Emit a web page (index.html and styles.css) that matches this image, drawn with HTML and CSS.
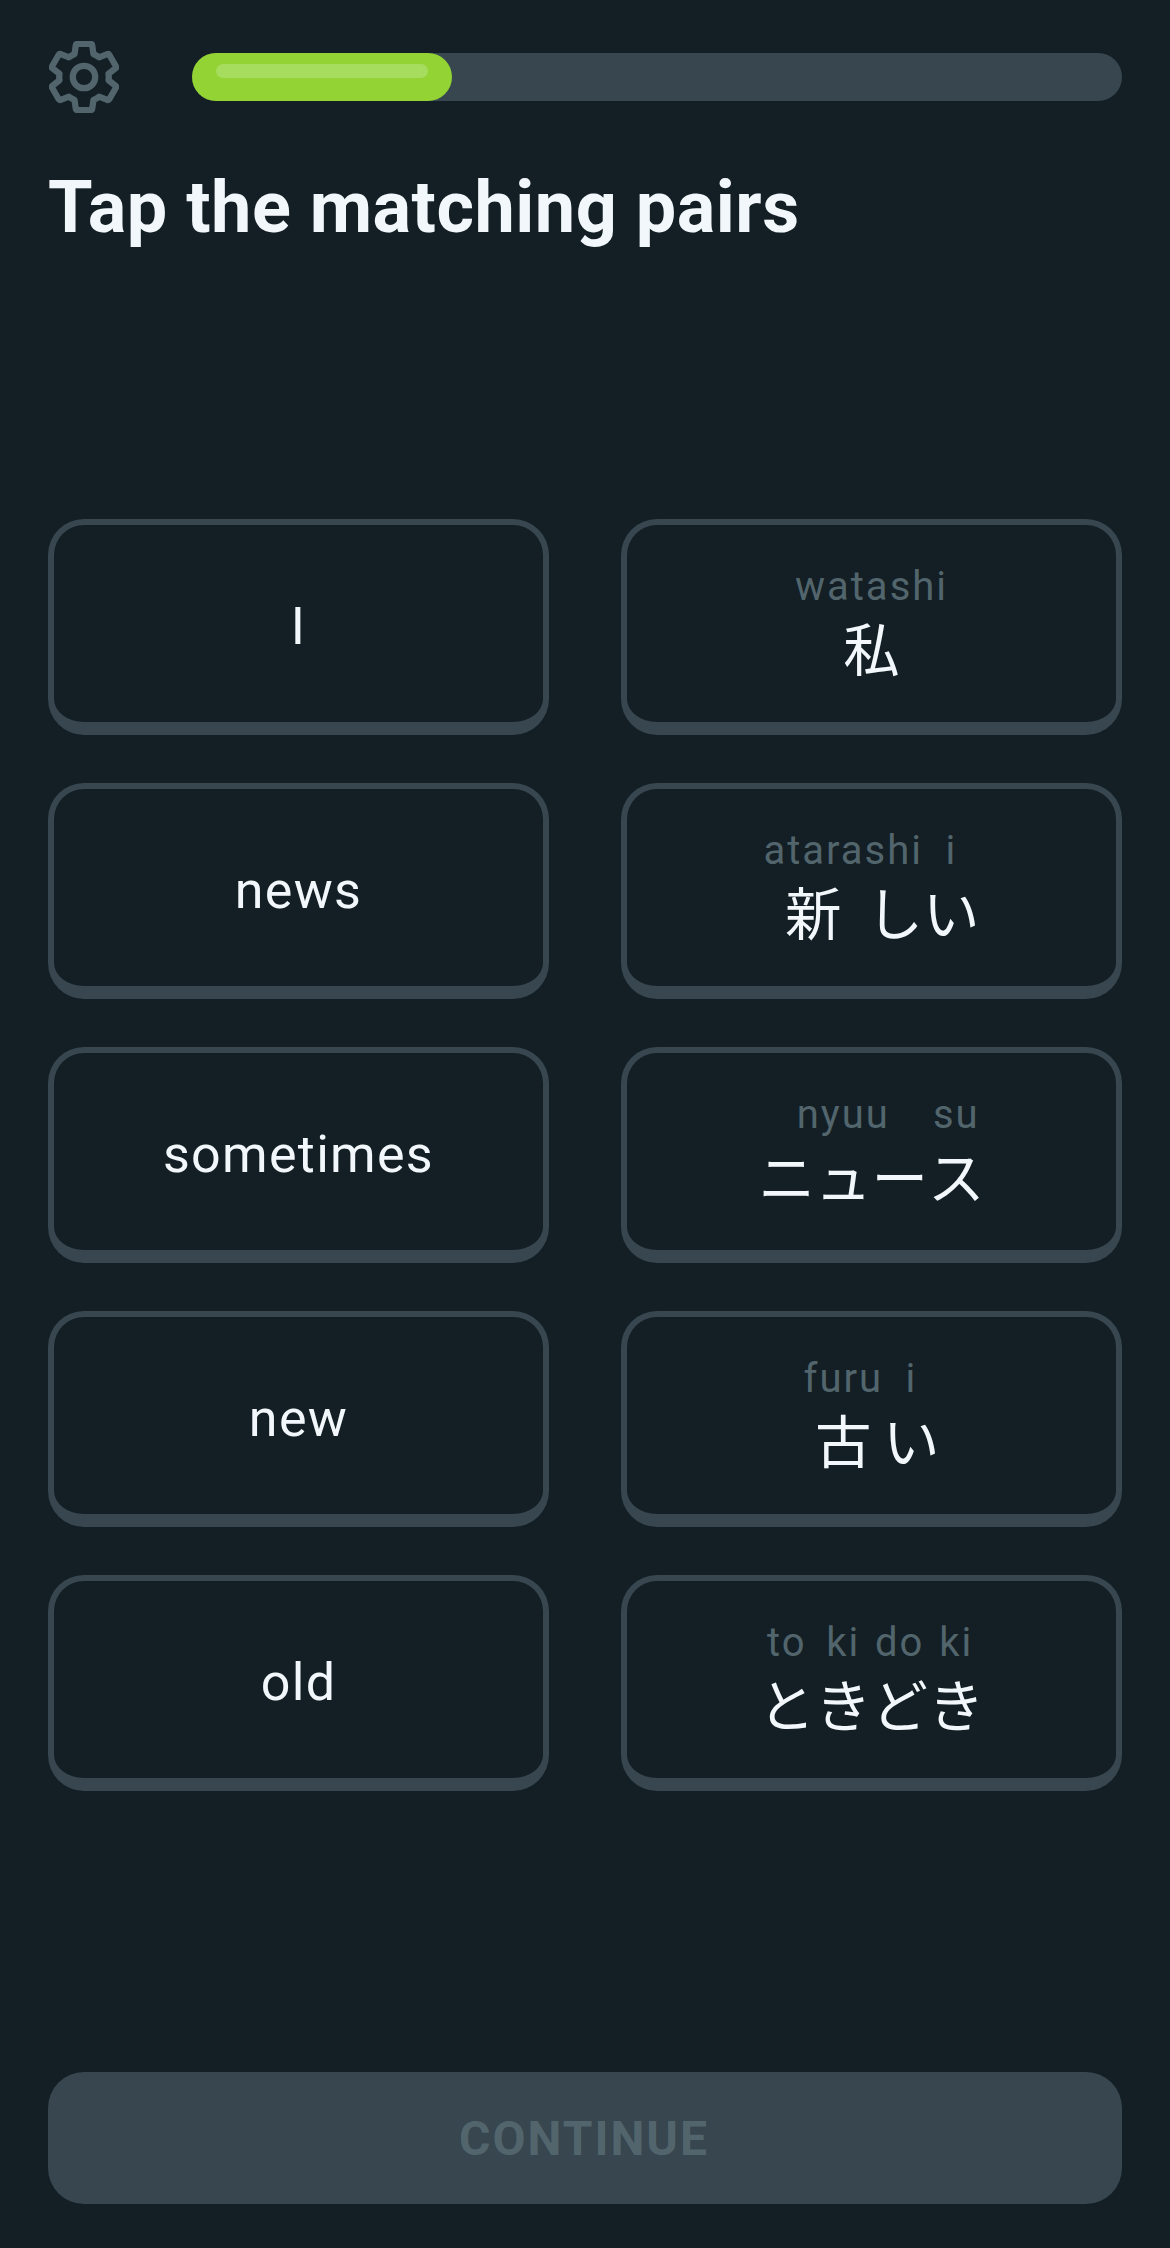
FILE: index.html
```html
<!DOCTYPE html>
<html lang="ja">
<head>
<meta charset="utf-8">
<title>Tap the matching pairs</title>
<link rel="stylesheet" href="styles.css">
</head>
<body>
<div class="screen">
  <header class="top">
    <svg class="gear" viewBox="1.4 1.1 21.2 21.8" fill="none" stroke="#52656d" stroke-width="1.9" stroke-linejoin="round">
      <path d="M19.43 12.98c.04-.32.07-.64.07-.98 0-.34-.03-.66-.07-.98l2.11-1.65c.19-.15.24-.42.12-.64l-2-3.46c-.09-.16-.26-.25-.44-.25-.06 0-.12.01-.17.03l-2.49 1c-.52-.4-1.08-.73-1.69-.98l-.38-2.65C14.46 2.18 14.25 2 14 2h-4c-.25 0-.46.18-.49.42l-.38 2.65c-.61.25-1.17.59-1.69.98l-2.49-1c-.06-.02-.12-.03-.18-.03-.17 0-.34.09-.43.25l-2 3.46c-.13.22-.07.49.12.64l2.11 1.65c-.04.32-.07.65-.07.98 0 .33.03.66.07.98l-2.11 1.65c-.19.15-.24.42-.12.64l2 3.46c.09.16.26.25.44.25.06 0 .12-.01.17-.03l2.49-1c.52.4 1.08.73 1.69.98l.38 2.65c.03.24.24.42.49.42h4c.25 0 .46-.18.49-.42l.38-2.65c.61-.25 1.17-.59 1.69-.98l2.49 1c.06.02.12.03.18.03.17 0 .34-.09.43-.25l2-3.46c.12-.22.07-.49-.12-.64l-2.11-1.65z"/>
      <circle cx="12" cy="12" r="3.4"/>
    </svg>
    <div class="track"><div class="fill"><div class="shine"></div></div></div>
  </header>
  <h1 class="title">Tap the matching pairs</h1>
  <main class="pairs">
    <button class="card"><span class="word">I</span></button>
    <button class="card"><span class="tokens">
      <span class="tok"><span class="rd">watashi</span><span class="jp"><span>私</span></span></span>
    </span></button>
    <button class="card"><span class="word">news</span></button>
    <button class="card"><span class="tokens">
      <span class="tok"><span class="rd">atarashi</span><span class="jp jp-end"><span>新</span><span>し</span></span></span>
      <span class="tok"><span class="rd">i</span><span class="jp"><span>い</span></span></span>
    </span></button>
    <button class="card"><span class="word">sometimes</span></button>
    <button class="card"><span class="tokens">
      <span class="tok"><span class="rd">nyuu</span><span class="jp"><span>ニ</span><span>ュ</span><span>ー</span></span></span>
      <span class="tok"><span class="rd">su</span><span class="jp"><span>ス</span></span></span>
    </span></button>
    <button class="card"><span class="word">new</span></button>
    <button class="card"><span class="tokens">
      <span class="tok"><span class="rd">furu</span><span class="jp"><span>古</span></span></span>
      <span class="tok"><span class="rd">i</span><span class="jp"><span>い</span></span></span>
    </span></button>
    <button class="card"><span class="word">old</span></button>
    <button class="card"><span class="tokens">
      <span class="tok"><span class="rd">to</span><span class="jp"><span>と</span></span></span>
      <span class="tok"><span class="rd">ki</span><span class="jp"><span>き</span></span></span>
      <span class="tok"><span class="rd">do</span><span class="jp"><span>ど</span></span></span>
      <span class="tok"><span class="rd">ki</span><span class="jp"><span>き</span></span></span>
    </span></button>
  </main>
  <button class="continue">CONTINUE</button>
</div>
</body>
</html>
```
FILE: styles.css
```css
* { box-sizing: border-box; }
html, body { margin: 0; padding: 0; }
body { background: #131f24; font-family: Roboto, "Noto Sans CJK JP", sans-serif; }
.screen { width: 1170px; height: 2248px; padding: 41px 48px 44px; display: flex; flex-direction: column; }
.top { display: flex; align-items: center; height: 72px; gap: 73px; padding-left: 1px; }
.gear { width: 70px; height: 72px; flex: none; }
.track { flex: 1; height: 48px; border-radius: 24px; background: #37464f; }
.fill { width: 260px; height: 48px; border-radius: 24px; background: #93d333; padding: 11px 24px; }
.shine { height: 14px; border-radius: 7px; background: #a6dd5f; }
.title { margin: 53px 0 0; color: #f1f7fb; font-size: 72px; line-height: 84px; font-weight: 700; letter-spacing: 0.5px; height: 84px; white-space: nowrap; }
.pairs { display: grid; grid-template-columns: 501px 501px; justify-content: space-between; grid-auto-rows: 216px; row-gap: 48px; margin-top: 269px; }
.card { background: transparent; border: solid #37464f; border-width: 6px 6px 13px; border-radius: 36px; padding: 0; display: flex; align-items: center; justify-content: center; font-family: inherit; }
.word { color: #f1f7fb; font-size: 52px; line-height: 60px; letter-spacing: 1.3px; padding-top: 6px; }
.tokens { display: flex; }
.tok { display: flex; flex-direction: column; align-items: center; gap: 9px; }
.rd { color: #52656d; font-size: 40px; line-height: 47px; letter-spacing: 2px; }
.jp { align-self: stretch; display: flex; justify-content: space-around; color: #f1f7fb; font-weight: 400; font-size: 56.5px; line-height: 66px; }
.jp-end { justify-content: flex-end; gap: 25px; }
.continue { margin-top: auto; height: 132px; flex: none; border: 0; border-radius: 36px; background: #37464f; color: #52656d; font-family: inherit; font-weight: 700; font-size: 48px; letter-spacing: 2px; padding: 0 2px 0 0; }
```
